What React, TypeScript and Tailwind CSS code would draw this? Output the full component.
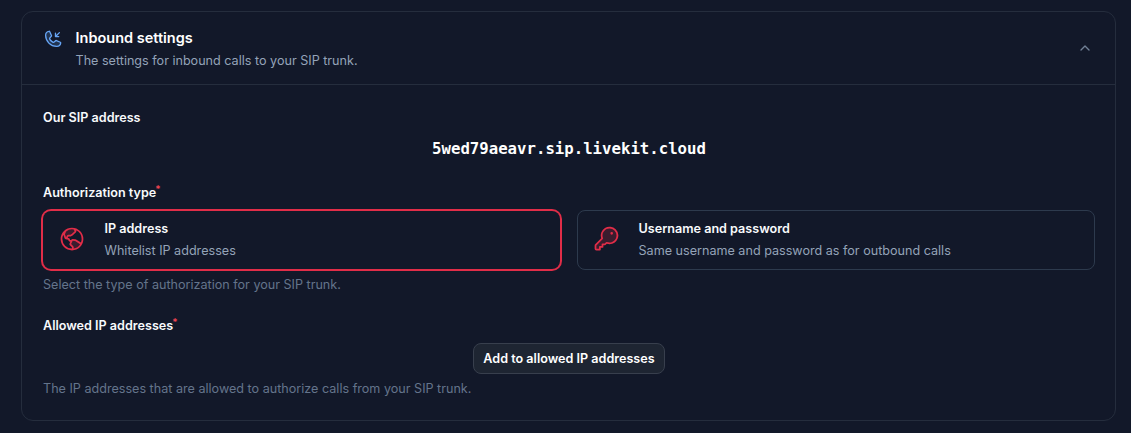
import type { ReactNode } from "react";
import { ChevronUp } from "lucide-react";
import {
  PiGlobeHemisphereWestDuotone,
  PiKeyDuotone,
  PiPhoneIncomingDuotone,
} from "react-icons/pi";

function Label({ children, required }: { children: ReactNode; required?: boolean }) {
  return (
    <div className="flex h-5 items-center text-[12.6px] font-semibold text-[#f8fafc]">
      {children}
      {required && <span className="-mt-2 -ml-px text-[10px] leading-3 text-[#f04452]">*</span>}
    </div>
  );
}

function Hint({ children }: { children: ReactNode }) {
  return <p className="text-[12.6px] leading-5 text-[#64748b]">{children}</p>;
}

type OptionProps = { icon: ReactNode; title: string; text: string; selected?: boolean };

function Option({ icon, title, text, selected }: OptionProps) {
  return (
    <button
      className={
        selected
          ? "mr-px flex h-[58px] items-center self-center rounded-lg pl-[15px] text-left ring-2 ring-[#e12d48]"
          : "flex h-[60px] items-center rounded-lg border border-[#2d3a4d] pl-[14px] text-left"
      }
    >
      <span className="mr-[17.5px] w-[29px] pb-0.5 text-[28px] text-[#e12d48]">{icon}</span>
      <span className="flex flex-col gap-0.5">
        <span className="text-[12.6px] leading-5 font-semibold text-[#f8fafc]">{title}</span>
        <span className="text-[12.6px] leading-5 text-[#94a3b8]">{text}</span>
      </span>
    </button>
  );
}

export default function App() {
  return (
    <main className="h-[433px] overflow-hidden bg-[#121829] pt-[11px] pr-[15px] pl-[21px] font-['Inter',sans-serif]">
      <section className="h-[410px] rounded-xl border border-[#252d3d]">
        <header className="flex h-[73px] items-start border-b border-[#252d3d] pt-4 pr-[22px] pl-[21px]">
          <PiPhoneIncomingDuotone className="mr-[11.5px] size-[21px] text-[#66a5f5]" />
          <div className="flex-1">
            <h2 className="text-[14.5px] leading-5 font-semibold text-white">Inbound settings</h2>
            <p className="mt-[3px] text-[12.6px] leading-5 text-[#94a3b8]">
              The settings for inbound calls to your SIP trunk.
            </p>
          </div>
          <ChevronUp className="mt-3 size-4 text-[#718096]" />
        </header>
        <div className="flex flex-col pt-[23px] pr-[20px] pl-[21px]">
          <Label>Our SIP address</Label>
          <p className="mt-[9px] text-center font-['DejaVu_Sans_Mono',monospace] text-[15.7px] leading-6 font-bold text-white">
            5wed79aeavr.sip.livekit.cloud
          </p>
          <div className="mt-[22px]">
            <Label required>Authorization type</Label>
          </div>
          <div className="mt-[7px] mb-[5px] grid grid-cols-2 gap-4">
            <Option selected icon={<PiGlobeHemisphereWestDuotone />} title="IP address" text="Whitelist IP addresses" />
            <Option icon={<PiKeyDuotone />} title="Username and password" text="Same username and password as for outbound calls" />
          </div>
          <Hint>Select the type of authorization for your SIP trunk.</Hint>
          <div className="mt-[21px]">
            <Label required>Allowed IP addresses</Label>
          </div>
          <button className="mt-[7px] mb-[5px] h-[31px] self-center rounded-lg border border-[#383f4d] bg-[#1e2532] px-[9px] pt-px text-[12.6px] font-semibold text-white">
            Add to allowed IP addresses
          </button>
          <Hint>The IP addresses that are allowed to authorize calls from your SIP trunk.</Hint>
        </div>
      </section>
    </main>
  );
}
